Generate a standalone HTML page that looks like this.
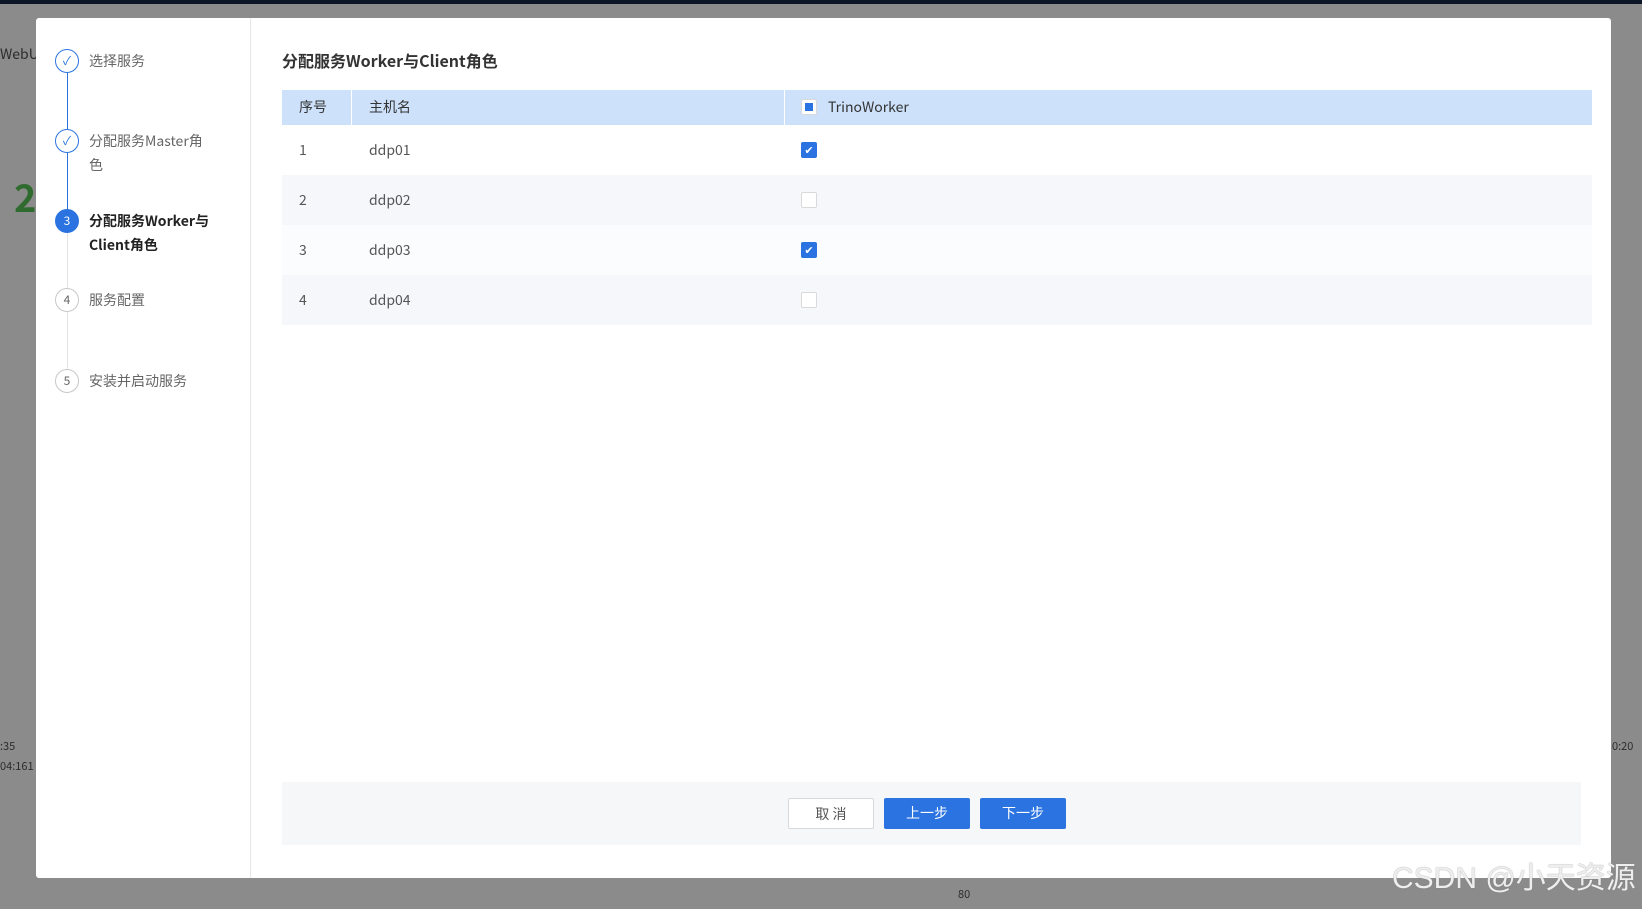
<!DOCTYPE html>
<html><head><meta charset="utf-8"><style>
*{box-sizing:border-box;margin:0;padding:0}
body{width:1642px;height:909px;overflow:hidden;background:#8b8b8b;font-family:"Noto Sans CJK SC","Liberation Sans",sans-serif;position:relative}
.top{position:absolute;left:0;top:0;width:1642px;height:4px;background:#0d1626}
.bgtxt{position:absolute;color:#2c2c2c;font-size:13px}
.modal{position:absolute;left:36px;top:18px;width:1575px;height:860px;background:#fff;border-radius:3px}
.side{position:absolute;left:0;top:0;width:215px;height:860px;border-right:1px solid #e6e6e6}
.circ{position:absolute;left:19px;width:24px;height:24px;border-radius:50%;border:1px solid #c8c8c8;font-size:12px;color:#666;text-align:center;line-height:22px;background:#fff}
.circ.done{border-color:#2a73e0;color:#2a73e0}
.circ.act{background:#2a73e0;border-color:#2a73e0;color:#fff}
.line{position:absolute;left:31px;width:1px}
.st{position:absolute;left:53px;font-size:14px;color:#666;line-height:24px;width:118px}
.st.b{color:#222;font-weight:bold;width:130px}
.title{position:absolute;left:246px;top:30px;font-size:16px;font-weight:bold;color:#333}
.tbl{position:absolute;left:246px;top:72px;width:1310px}
.row{position:relative;height:50px;font-size:14px;color:#555}
.row div{position:absolute;top:0;line-height:50px}
.hd{height:35px;background:#cde1fb;color:#333}
.hd div{line-height:35px}
.alt{background:#f5f7fb}
.cb{position:absolute;left:519px;width:16px;height:16px;border:1px solid #d9d9d9;border-radius:2px;background:#fff}
.cb.on{background:#2a73e0;border-color:#2a73e0}
.foot{position:absolute;left:246px;top:764px;width:1299px;height:63px;background:#f6f7f9}
.btn{position:absolute;top:16px;width:86px;height:31px;font-size:14px;text-align:center;line-height:31px;border-radius:2px}
</style></head><body>
<div class="top"></div>
<div class="bgtxt" style="left:0;top:44px;font-size:14px">WebUI</div>
<div style="position:absolute;left:14px;top:168px;font-size:38px;color:#2f6b2f;font-weight:bold">2</div>
<div class="bgtxt" style="left:0;top:738px;font-size:11px">:35</div>
<div class="bgtxt" style="left:0;top:758px;font-size:11px">04:161</div>
<div class="bgtxt" style="left:1612px;top:738px;font-size:11px">0:20</div>
<div class="bgtxt" style="left:958px;top:886px;font-size:11px">80</div>
<div class="modal">
 <div class="side">
  <div class="line" style="top:55px;height:68px;background:#2a73e0"></div>
  <div class="line" style="top:135px;height:68px;background:#2a73e0"></div>
  <div class="line" style="top:215px;height:68px;background:#e3e3e3"></div>
  <div class="line" style="top:294px;height:68px;background:#e3e3e3"></div>
  <div class="circ done" style="top:31px">✓</div><div class="st" style="top:31px">选择服务</div>
  <div class="circ done" style="top:111px">✓</div><div class="st" style="top:111px">分配服务Master角色</div>
  <div class="circ act" style="top:191px">3</div><div class="st b" style="top:191px">分配服务Worker与Client角色</div>
  <div class="circ" style="top:270px">4</div><div class="st" style="top:270px">服务配置</div>
  <div class="circ" style="top:351px">5</div><div class="st" style="top:351px">安装并启动服务</div>
 </div>
 <div class="title">分配服务Worker与Client角色</div>
 <div class="tbl">
  <div class="row hd"><div style="left:17px">序号</div><div style="left:69px;width:1px;background:#fff;height:35px"></div><div style="left:87px">主机名</div><div style="left:502px;width:1px;background:#fff;height:35px"></div><div class="cb" style="top:9px;line-height:0"><span style="position:absolute;left:3px;top:3px;width:8px;height:8px;background:#2a73e0"></span></div><div style="left:546px">TrinoWorker</div></div>
  <div class="row"><div style="left:17px">1</div><div style="left:87px">ddp01</div><div class="cb on" style="top:17px;line-height:14px;color:#fff;font-size:11px;text-align:center">✔</div></div>
  <div class="row alt"><div style="left:17px">2</div><div style="left:87px">ddp02</div><div class="cb" style="top:17px"></div></div>
  <div class="row" style="background:#fbfcfe"><div style="left:17px">3</div><div style="left:87px">ddp03</div><div class="cb on" style="top:17px;line-height:14px;color:#fff;font-size:11px;text-align:center">✔</div></div>
  <div class="row alt"><div style="left:17px">4</div><div style="left:87px">ddp04</div><div class="cb" style="top:17px"></div></div>
 </div>
 <div class="foot">
  <div class="btn" style="left:506px;background:#fff;border:1px solid #d9d9d9;color:#555">取 消</div>
  <div class="btn" style="left:602px;background:#2a73e0;color:#fff">上一步</div>
  <div class="btn" style="left:698px;background:#2a73e0;color:#fff">下一步</div>
 </div>
</div>
<div style="position:absolute;left:1392px;top:864px;font-size:30px;color:#eee;line-height:1;z-index:5;font-family:'Liberation Sans','Noto Sans CJK SC',sans-serif;text-shadow:0 0 1px #777">CSDN @小天资源</div>
</body></html>
